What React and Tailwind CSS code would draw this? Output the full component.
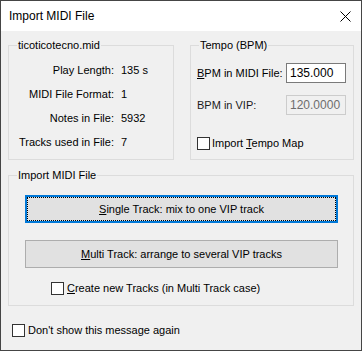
import React from 'react';

const font = { fontFamily: '"Liberation Sans", Arial, sans-serif' };

function Box() {
  return <span className="inline-block w-[13px] h-[13px] border border-[#333] bg-white shrink-0" />;
}

function Group({ label, className, children }) {
  return (
    <div className={`relative border border-[#dcdcdc] ${className}`}>
      <span className="absolute -top-[8px] left-[8px] px-[1px] bg-[#f0f0f0] leading-[14px]">{label}</span>
      {children}
    </div>
  );
}

export default function App() {
  const info = [
    ['Play Length:', '135 s'],
    ['MIDI File Format:', '1'],
    ['Notes in File:', '5932'],
    ['Tracks used in File:', '7'],
  ];

  return (
    <div style={font} className="w-[362px] h-[351px] border border-[#454545] flex flex-col text-[11px] text-black">
      {/* title bar */}
      <div className="h-[30px] bg-white flex items-center justify-between pl-[8px] pr-[10px] shrink-0">
        <span className="text-[12px]">Import MIDI File</span>
        <svg width="11" height="11" viewBox="0 0 11 11">
          <path d="M0.5 0.5L10.5 10.5M10.5 0.5L0.5 10.5" stroke="#000" strokeWidth="1" />
        </svg>
      </div>

      <div className="flex-1 bg-[#f0f0f0] px-[7px] pt-[14px]">
        <div className="flex gap-[16px]">
          <Group label="ticoticotecno.mid" className="w-[166px] h-[115px]">
            <div className="grid grid-cols-[105px_auto] gap-x-[7px] pt-[12px]">
              {info.map(([k, v]) => (
                <React.Fragment key={k}>
                  <span className="text-right leading-[24px]">{k}</span>
                  <span className="leading-[24px]">{v}</span>
                </React.Fragment>
              ))}
            </div>
          </Group>

          <Group label="Tempo (BPM)" className="w-[164px] h-[115px]">
            <div className="flex flex-col pl-[6px] pt-[17px]">
              <div className="flex items-center">
                <span className="w-[89px]"><u>B</u>PM in MIDI File:</span>
                <span className="w-[60px] h-[20px] border border-[#7a7a7a] bg-white flex items-center pl-[3px] text-[12px]">135.000</span>
              </div>
              <div className="flex items-center mt-[12px]">
                <span className="w-[89px] text-[#1a1a1a]">BPM in VIP:</span>
                <span className="w-[60px] h-[20px] border border-[#cccccc] bg-[#f0f0f0] flex items-center pl-[3px] text-[12px] text-[#6d6d6d]">120.0000</span>
              </div>
              <label className="flex items-center gap-[2px] mt-[20px]">
                <Box />
                <span>Import <u>T</u>empo Map</span>
              </label>
            </div>
          </Group>
        </div>

        <Group label="Import MIDI File" className="mt-[15px] w-[346px] h-[131px]">
          <div className="flex flex-col pl-[16px] pt-[19px]">
            <button className="w-[313px] h-[28px] border-2 border-[#0078d7] bg-[#e1e1e1] p-0">
              <div className="w-full h-full border border-dotted border-black flex items-center justify-center">
                <span><u>S</u>ingle Track: mix to one VIP track</span>
              </div>
            </button>
            <button className="w-[313px] h-[28px] mt-[17px] border border-[#adadad] bg-[#e1e1e1] flex items-center justify-center">
              <span><u>M</u>ulti Track: arrange to several VIP tracks</span>
            </button>
            <label className="flex items-center gap-[3px] mt-[12px] ml-[26px]">
              <Box />
              <span><u>C</u>reate new Tracks (in Multi Track case)</span>
            </label>
          </div>
        </Group>

        <label className="flex items-center gap-[3px] mt-[16px] ml-[4px]">
          <Box />
          <span>Don't show this message again</span>
        </label>
      </div>
    </div>
  );
}
